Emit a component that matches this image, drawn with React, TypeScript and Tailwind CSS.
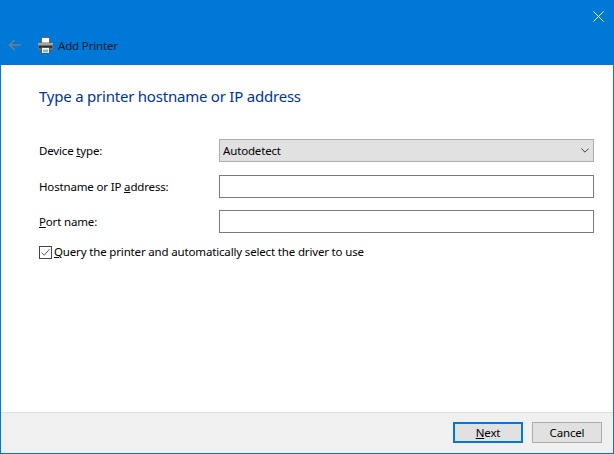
import React from "react";

const font = { fontFamily: '"Noto Sans", "Open Sans", sans-serif' };

function Printer() {
  return (
    <svg width="17" height="17" viewBox="0 0 17 17" className="shrink-0">
      <rect x="4.5" y="0.5" width="8" height="6" fill="#fff" stroke="#666" />
      <path d="M1 7 Q1 5.5 2.5 5.5 H14.5 Q16 5.5 16 7 V13 H1 Z" fill="#6a6c70" />
      <rect x="1" y="6" width="15" height="2" fill="#a2a4a8" />
      <rect x="2" y="9" width="13" height="2" fill="#2f3033" />
      <rect x="4.5" y="10.5" width="8" height="6" fill="#fff" stroke="#555" />
      <rect x="6" y="12.5" width="5" height="3" fill="#6fc3d6" />
    </svg>
  );
}

function Row({ label, children, className }: { label: React.ReactNode; children: React.ReactNode; className?: string }) {
  return (
    <div className={"flex items-center h-[23px] " + (className ?? "")}>
      <div className="w-[180px] shrink-0 text-black">{label}</div>
      <div className="w-[375px]">{children}</div>
    </div>
  );
}

export default function App() {
  return (
    <div
      className="w-[614px] h-[454px] flex flex-col border border-[#0078d7] bg-white text-[11.5px] tracking-[-0.16px] leading-none overflow-hidden"
      style={font}
    >
      <div className="h-[64px] shrink-0 bg-[#0078d7] flex flex-col">
        <div className="h-[29px] flex justify-end items-center pr-[9px] pt-[1px]">
          <svg width="11" height="11" viewBox="0 0 11 11">
            <path d="M0.5 0.5 L10.5 10.5 M10.5 0.5 L0.5 10.5" stroke="#fff" strokeWidth="1" />
          </svg>
        </div>
        <div className="flex items-center h-[30px] pl-[7px]">
          <svg width="14" height="12" viewBox="0 0 14 12" className="mr-[15px]">
            <path d="M13 6 H1.5 M6.5 1 L1.5 6 L6.5 11" fill="none" stroke="#6c7f93" strokeWidth="1.6" />
          </svg>
          <Printer />
          <span className="ml-[4px] pt-[1px] text-[#0a1a2a]">Add Printer</span>
        </div>
      </div>

      <div className="flex-1 flex flex-col pl-[38px]">
        <h1 className="mt-[21px] text-[15px] leading-[20px] tracking-[-0.22px] font-normal text-[#003399]">
          Type a printer hostname or IP address
        </h1>
        <div className="mt-[33px] flex flex-col">
          <Row label={<>Device <u>t</u>ype:</>}>
            <div className="h-[23px] border border-[#adadad] bg-[#e1e1e1] flex items-center justify-between pl-[3px] pr-[4px] text-black">
              <span>Autodetect</span>
              <svg width="8" height="5" viewBox="0 0 8 5">
                <path d="M0.3 0.5 L4 4.2 L7.7 0.5" fill="none" stroke="#404040" strokeWidth="1" />
              </svg>
            </div>
          </Row>
          <Row className="mt-[13px]" label={<>Hostname or IP <u>a</u>ddress:</>}>
            <div className="h-[23px] border border-[#7a7a7a] bg-white" />
          </Row>
          <Row className="mt-[12px]" label={<><u>P</u>ort name:</>}>
            <div className="h-[23px] border border-[#7a7a7a] bg-white" />
          </Row>
        </div>
        <div className="mt-[12px] flex items-center h-[14px]">
          <svg width="13" height="13" viewBox="0 0 13 13" className="shrink-0">
            <rect x="0.5" y="0.5" width="12" height="12" fill="#fff" stroke="#444" />
            <path d="M2.5 6.5 L5.2 9.2 L10.5 3.2" fill="none" stroke="#555" strokeWidth="1" />
          </svg>
          <span className="ml-[2px] text-black">
            <u>Q</u>uery the printer and automatically select the driver to use
          </span>
        </div>
      </div>

      <div className="h-[41px] shrink-0 bg-[#f0f0f0] border-t border-[#dfdfdf] flex justify-end items-start pt-[9px] pr-[11px] gap-[9px]">
        <button className="w-[70px] h-[21px] border-2 border-[#0078d7] bg-[#e1e1e1] text-black">
          <u>N</u>ext
        </button>
        <button className="w-[70px] h-[21px] border border-[#adadad] bg-[#e1e1e1] text-black">
          Cancel
        </button>
      </div>
    </div>
  );
}
